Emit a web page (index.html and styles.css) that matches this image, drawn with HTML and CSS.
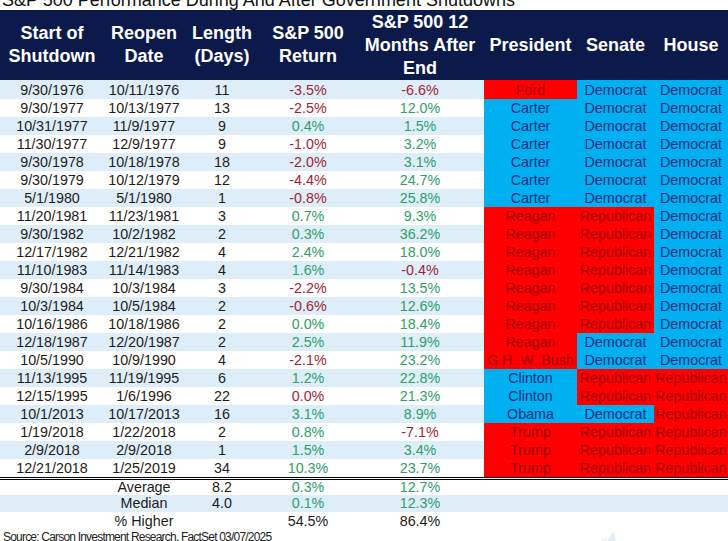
FILE: index.html
```html
<!DOCTYPE html>
<html lang="en">
<head>
<meta charset="utf-8">
<title>S&amp;P 500 Performance During And After Government Shutdowns</title>
<link rel="stylesheet" href="styles.css">
</head>
<body>
<div class="page">
  <h1 class="title">S&amp;P 500 Performance During And After Government Shutdowns</h1>
  <div class="row head">
    <div>Start of<br>Shutdown</div>
    <div>Reopen<br>Date</div>
    <div>Length<br>(Days)</div>
    <div>S&amp;P 500<br>Return</div>
    <div>S&amp;P 500 12<br>Months After<br>End</div>
    <div>President</div>
    <div>Senate</div>
    <div>House</div>
  </div>
  <div class="body">
    <div class="row alt first"><div>9/30/1976</div><div>10/11/1976</div><div>11</div><div class="neg">-3.5%</div><div class="neg">-6.6%</div><div class="r">Ford</div><div class="d">Democrat</div><div class="d">Democrat</div></div>
    <div class="row"><div>9/30/1977</div><div>10/13/1977</div><div>13</div><div class="neg">-2.5%</div><div class="pos">12.0%</div><div class="d">Carter</div><div class="d">Democrat</div><div class="d">Democrat</div></div>
    <div class="row alt"><div>10/31/1977</div><div>11/9/1977</div><div>9</div><div class="pos">0.4%</div><div class="pos">1.5%</div><div class="d">Carter</div><div class="d">Democrat</div><div class="d">Democrat</div></div>
    <div class="row"><div>11/30/1977</div><div>12/9/1977</div><div>9</div><div class="neg">-1.0%</div><div class="pos">3.2%</div><div class="d">Carter</div><div class="d">Democrat</div><div class="d">Democrat</div></div>
    <div class="row alt"><div>9/30/1978</div><div>10/18/1978</div><div>18</div><div class="neg">-2.0%</div><div class="pos">3.1%</div><div class="d">Carter</div><div class="d">Democrat</div><div class="d">Democrat</div></div>
    <div class="row"><div>9/30/1979</div><div>10/12/1979</div><div>12</div><div class="neg">-4.4%</div><div class="pos">24.7%</div><div class="d">Carter</div><div class="d">Democrat</div><div class="d">Democrat</div></div>
    <div class="row alt"><div>5/1/1980</div><div>5/1/1980</div><div>1</div><div class="neg">-0.8%</div><div class="pos">25.8%</div><div class="d">Carter</div><div class="d">Democrat</div><div class="d">Democrat</div></div>
    <div class="row"><div>11/20/1981</div><div>11/23/1981</div><div>3</div><div class="pos">0.7%</div><div class="pos">9.3%</div><div class="r">Reagan</div><div class="r">Republican</div><div class="d">Democrat</div></div>
    <div class="row alt"><div>9/30/1982</div><div>10/2/1982</div><div>2</div><div class="pos">0.3%</div><div class="pos">36.2%</div><div class="r">Reagan</div><div class="r">Republican</div><div class="d">Democrat</div></div>
    <div class="row"><div>12/17/1982</div><div>12/21/1982</div><div>4</div><div class="pos">2.4%</div><div class="pos">18.0%</div><div class="r">Reagan</div><div class="r">Republican</div><div class="d">Democrat</div></div>
    <div class="row alt"><div>11/10/1983</div><div>11/14/1983</div><div>4</div><div class="pos">1.6%</div><div class="neg">-0.4%</div><div class="r">Reagan</div><div class="r">Republican</div><div class="d">Democrat</div></div>
    <div class="row"><div>9/30/1984</div><div>10/3/1984</div><div>3</div><div class="neg">-2.2%</div><div class="pos">13.5%</div><div class="r">Reagan</div><div class="r">Republican</div><div class="d">Democrat</div></div>
    <div class="row alt"><div>10/3/1984</div><div>10/5/1984</div><div>2</div><div class="neg">-0.6%</div><div class="pos">12.6%</div><div class="r">Reagan</div><div class="r">Republican</div><div class="d">Democrat</div></div>
    <div class="row"><div>10/16/1986</div><div>10/18/1986</div><div>2</div><div class="pos">0.0%</div><div class="pos">18.4%</div><div class="r">Reagan</div><div class="r">Republican</div><div class="d">Democrat</div></div>
    <div class="row alt"><div>12/18/1987</div><div>12/20/1987</div><div>2</div><div class="pos">2.5%</div><div class="pos">11.9%</div><div class="r">Reagan</div><div class="d">Democrat</div><div class="d">Democrat</div></div>
    <div class="row"><div>10/5/1990</div><div>10/9/1990</div><div>4</div><div class="neg">-2.1%</div><div class="pos">23.2%</div><div class="r">G.H. W. Bush</div><div class="d">Democrat</div><div class="d">Democrat</div></div>
    <div class="row alt"><div>11/13/1995</div><div>11/19/1995</div><div>6</div><div class="pos">1.2%</div><div class="pos">22.8%</div><div class="d">Clinton</div><div class="r">Republican</div><div class="r">Republican</div></div>
    <div class="row"><div>12/15/1995</div><div>1/6/1996</div><div>22</div><div class="neg">0.0%</div><div class="pos">21.3%</div><div class="d">Clinton</div><div class="r">Republican</div><div class="r">Republican</div></div>
    <div class="row alt"><div>10/1/2013</div><div>10/17/2013</div><div>16</div><div class="pos">3.1%</div><div class="pos">8.9%</div><div class="d">Obama</div><div class="d">Democrat</div><div class="r">Republican</div></div>
    <div class="row"><div>1/19/2018</div><div>1/22/2018</div><div>2</div><div class="pos">0.8%</div><div class="neg">-7.1%</div><div class="r">Trump</div><div class="r">Republican</div><div class="r">Republican</div></div>
    <div class="row alt"><div>2/9/2018</div><div>2/9/2018</div><div>1</div><div class="pos">1.5%</div><div class="pos">3.4%</div><div class="r">Trump</div><div class="r">Republican</div><div class="r">Republican</div></div>
    <div class="row"><div>12/21/2018</div><div>1/25/2019</div><div>34</div><div class="pos">10.3%</div><div class="pos">23.7%</div><div class="r">Trump</div><div class="r">Republican</div><div class="r">Republican</div></div>
  </div>
  <div class="summary">
    <div class="row avg"><div></div><div>Average</div><div>8.2</div><div class="pos">0.3%</div><div class="pos">12.7%</div><div></div><div></div><div></div></div>
    <div class="row alt med"><div></div><div>Median</div><div>4.0</div><div class="pos">0.1%</div><div class="pos">12.3%</div><div></div><div></div><div></div></div>
    <div class="row"><div></div><div>% Higher</div><div></div><div>54.5%</div><div>86.4%</div><div></div><div></div><div></div></div>
  </div>
  <p class="source">Source: Carson Investment Research, FactSet 03/07/2025</p>
  <svg class="logo" width="30" height="16" viewBox="0 0 30 16" aria-hidden="true">
    <path d="M10 16 L18 4 L20 16 Z" fill="#e3ecf4"/>
    <path d="M2 16 L10 10 L12 16 Z" fill="#eef3f8"/>
  </svg>
</div>
</body>
</html>
```

FILE: styles.css
```css
html, body {
  margin: 0;
  padding: 0;
  background: #ffffff;
}

body {
  font-family: "Liberation Sans", Arial, sans-serif;
  color: #1c1c1c;
  overflow: hidden;
}

.page {
  position: relative;
  width: 728px;
  height: 541px;
  overflow: hidden;
}

.title {
  margin: -9px 0 0 2px;
  height: 19px;
  font-size: 18px;
  line-height: 18px;
  font-weight: normal;
  color: #111;
  white-space: nowrap;
}

.row {
  display: grid;
  grid-template-columns: 104px 80px 76px 96px 128px 93px 77px 74px;
  height: 18px;
  font-size: 14.3px;
  line-height: 18px;
  text-align: center;
  white-space: nowrap;
}

.row > div {
  overflow: hidden;
}

.alt {
  background: #ddeef9;
}

.head {
  height: 70px;
  background: #0c1a4b;
  color: #ffffff;
  font-size: 18px;
  font-weight: bold;
  line-height: 23px;
  align-items: center;
}

.head > div {
  overflow: visible;
}

.first {
  height: 19px;
  line-height: 20px;
}

.neg {
  color: #a51d35;
}

.pos {
  color: #2e9f6b;
}

.r {
  background: #ff0000;
  color: #a00000;
}

.d {
  background: #00b0f0;
  color: #0d2f80;
}

.summary {
  border-top: 3px double #000;
}

.avg {
  height: 15px;
  line-height: 15px;
}

.med {
  height: 17px;
  line-height: 17px;
}

.source {
  margin: 0 0 0 3px;
  font-size: 12px;
  line-height: 15px;
  letter-spacing: -0.8px;
  color: #222;
  white-space: nowrap;
}

.logo {
  position: absolute;
  left: 596px;
  top: 527px;
}
```
